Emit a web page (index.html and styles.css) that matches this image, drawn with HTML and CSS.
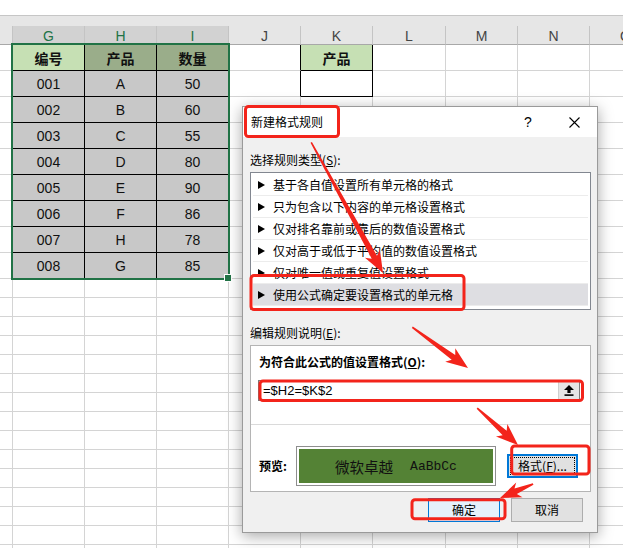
FILE: index.html
```html
<!DOCTYPE html>
<html lang="zh-CN">
<head>
<meta charset="utf-8">
<title>新建格式规则</title>
<link rel="stylesheet" href="styles.css">
</head>
<body>
<div class="topbar"></div>
<div class="band"></div>
<div class="sheet">
  <span class="ch"></span><span class="ch sel">G</span><span class="ch sel">H</span><span class="ch sel">I</span><span class="ch">J</span><span class="ch">K</span><span class="ch">L</span><span class="ch">M</span><span class="ch">N</span><span class="ch">O</span>

  <span></span><span class="t h1 act">编号</span><span class="t h1">产品</span><span class="t h1">数量</span><span class="jk"></span><span class="k k1">产品</span><span></span><span></span><span></span><span></span>
  <span></span><span class="t">001</span><span class="t">A</span><span class="t">50</span><span class="jk"></span><span class="k"></span><span></span><span></span><span></span><span></span>
  <span></span><span class="t">002</span><span class="t">B</span><span class="t">60</span><span></span><span></span><span></span><span></span><span></span><span></span>
  <span></span><span class="t">003</span><span class="t">C</span><span class="t">55</span><span></span><span></span><span></span><span></span><span></span><span></span>
  <span></span><span class="t">004</span><span class="t">D</span><span class="t">80</span><span></span><span></span><span></span><span></span><span></span><span></span>
  <span></span><span class="t">005</span><span class="t">E</span><span class="t">90</span><span></span><span></span><span></span><span></span><span></span><span></span>
  <span></span><span class="t">006</span><span class="t">F</span><span class="t">86</span><span></span><span></span><span></span><span></span><span></span><span></span>
  <span></span><span class="t">007</span><span class="t">H</span><span class="t">78</span><span></span><span></span><span></span><span></span><span></span><span></span>
  <span></span><span class="t">008</span><span class="t">G</span><span class="t">85</span><span></span><span></span><span></span><span></span><span></span><span></span>

  <span></span><span></span><span></span><span></span><span></span><span></span><span></span><span></span><span></span><span></span>
  <span></span><span></span><span></span><span></span><span></span><span></span><span></span><span></span><span></span><span></span>
  <span></span><span></span><span></span><span></span><span></span><span></span><span></span><span></span><span></span><span></span>
  <span></span><span></span><span></span><span></span><span></span><span></span><span></span><span></span><span></span><span></span>
  <span></span><span></span><span></span><span></span><span></span><span></span><span></span><span></span><span></span><span></span>
  <span></span><span></span><span></span><span></span><span></span><span></span><span></span><span></span><span></span><span></span>
  <span></span><span></span><span></span><span></span><span></span><span></span><span></span><span></span><span></span><span></span>
  <span></span><span></span><span></span><span></span><span></span><span></span><span></span><span></span><span></span><span></span>
  <span></span><span></span><span></span><span></span><span></span><span></span><span></span><span></span><span></span><span></span>
  <span></span><span></span><span></span><span></span><span></span><span></span><span></span><span></span><span></span><span></span>
  <span></span><span></span><span></span><span></span><span></span><span></span><span></span><span></span><span></span><span></span>
  <span></span><span></span><span></span><span></span><span></span><span></span><span></span><span></span><span></span><span></span>
  <span></span><span></span><span></span><span></span><span></span><span></span><span></span><span></span><span></span><span></span>
  <span></span><span></span><span></span><span></span><span></span><span></span><span></span><span></span><span></span><span></span>
  <span></span><span></span><span></span><span></span><span></span><span></span><span></span><span></span><span></span><span></span>
</div>
<div class="selection"></div>
<div class="handle"></div>

<div class="dialog">
  <div class="titlebar">
    <span class="title">新建格式规则</span>
    <span class="tb-btn help">?</span>
    <span class="tb-btn close"><svg width="11" height="11" viewBox="0 0 11 11"><path d="M0.5 0.5L10.5 10.5M10.5 0.5L0.5 10.5" stroke="#000" stroke-width="1.1" fill="none"/></svg></span>
  </div>
  <div class="dbody">
    <div class="lbl lbl1">选择规则类型(<u>S</u>):</div>
    <div class="listbox">
      <div class="item"><i class="tri"></i>基于各自值设置所有单元格的格式</div>
      <div class="item"><i class="tri"></i>只为包含以下内容的单元格设置格式</div>
      <div class="item"><i class="tri"></i>仅对排名靠前或靠后的数值设置格式</div>
      <div class="item"><i class="tri"></i>仅对高于或低于平均值的数值设置格式</div>
      <div class="item"><i class="tri"></i>仅对唯一值或重复值设置格式</div>
      <div class="item on"><i class="tri"></i>使用公式确定要设置格式的单元格</div>
    </div>
    <div class="lbl lbl2">编辑规则说明(<u>E</u>):</div>
    <div class="group">
      <div class="g-top">
        <div class="blbl">为符合此公式的值设置格式(<u>O</u>):</div>
        <div class="formula">
          <span class="ftext">=$H2=$K$2</span>
          <span class="collapse"><svg width="10" height="11" viewBox="0 0 10 11"><path d="M5 0L10 5H6.6V8H3.4V5H0Z" fill="#000"/><rect x="0.5" y="9.3" width="9" height="1.6" fill="#000"/></svg></span>
        </div>
      </div>
      <div class="g-bot">
        <span class="blbl pv-l">预览:</span>
        <div class="preview"><div class="pv-in"><span class="cj">微软卓越</span><span class="lat">AaBbCc</span></div></div>
        <button class="btn fmt">格式(<u>F</u>)...</button>
      </div>
    </div>
    <div class="actions">
      <button class="btn ok">确定</button>
      <button class="btn">取消</button>
    </div>
  </div>
</div>

<svg class="annot" width="623" height="548" viewBox="0 0 623 548">
  <g fill="#f3241b">
    <polygon transform="translate(383 273) rotate(61.2)" points="-149,-0.8 -18,-3 -22,-8.5 0,0 -22,8.5 -18,3 -149,0.8"/>
    <polygon transform="translate(468 368) rotate(36.2)" points="-69,-0.8 -18,-3 -22,-8.5 0,0 -22,8.5 -18,3 -69,0.8"/>
    <polygon transform="translate(518 445) rotate(42.1)" points="-55,-0.8 -18,-3 -22,-8.5 0,0 -22,8.5 -18,3 -55,0.8"/>
    <polygon transform="translate(500 498) rotate(157)" points="-36,-0.8 -17,-3 -21,-8 0,0 -21,8 -17,3 -36,0.8"/>
  </g>
  <g fill="none" stroke="#f3241b" stroke-width="3">
    <rect x="245.5" y="106.5" width="93" height="30" rx="3"/>
    <rect x="251" y="275.5" width="213" height="34" rx="3"/>
    <rect x="260" y="381" width="322.5" height="19.5" rx="3"/>
    <rect x="511.7" y="446" width="77.3" height="28" rx="3"/>
    <rect x="412" y="499.7" width="93" height="19" rx="3"/>
  </g>
</svg>
</body>
</html>
```

FILE: styles.css
```css
html, body {
  margin: 0;
  padding: 0;
  width: 623px;
  height: 548px;
  overflow: hidden;
  background: #fff;
}
body {
  position: relative;
  font-family: "Liberation Sans", "Noto Sans CJK SC", sans-serif;
}
.topbar {
  height: 15px;
  border-bottom: 1px solid #c6c6c6;
}
.band {
  height: 10px;
  background: #e6e6e6;
}
.sheet {
  display: grid;
  grid-template-columns: 13px 72px 72px 72px 72px 72px 73px 72px 72px 72px;
  grid-template-rows: 19px repeat(9, 26px) repeat(15, 19px);
  font-size: 14px;
  color: #111;
}
.sheet > span {
  box-sizing: border-box;
  border-right: 1px solid #d4d4d4;
  border-bottom: 1px solid #d4d4d4;
  display: flex;
  align-items: center;
  justify-content: center;
  overflow: hidden;
}
.sheet > span.ch {
  background: #e6e6e6;
  border-right-color: #c4c4c4;
  border-bottom-color: #a8a8a8;
  color: #444;
  font-size: 14px;
  padding-top: 2px;
}
.sheet > span.ch.sel {
  background: #d2d2d2;
  color: #217346;
}
.sheet > span.t {
  background: #c8c8c8;
  border-right-color: #000;
  border-bottom-color: #000;
}
.sheet > span.h1 {
  background: #9aad8a;
  font-family: "Noto Sans CJK SC", sans-serif;
  font-weight: bold;
  font-size: 14px;
}
.sheet > span.act {
  background: #c6e0b4;
}
.sheet > span.jk {
  border-right-color: #000;
}
.sheet > span.k {
  border-right-color: #000;
  border-bottom-color: #000;
}
.sheet > span.k1 {
  background: #c6e0b4;
  font-family: "Noto Sans CJK SC", sans-serif;
  font-weight: bold;
}
.selection {
  position: absolute;
  left: 11px;
  top: 43px;
  width: 219px;
  height: 237px;
  box-sizing: border-box;
  border: 2px solid #217346;
}
.handle {
  position: absolute;
  left: 224px;
  top: 274px;
  width: 6px;
  height: 6px;
  background: #217346;
  border: 1px solid #fff;
}

/* dialog */
.dialog {
  position: absolute;
  left: 242px;
  top: 106px;
  width: 356px;
  height: 427px;
  box-sizing: border-box;
  border: 1px solid #9a9a9a;
  background: #f0f0f0;
  box-shadow: 0 3px 14px rgba(0, 0, 0, 0.35);
  font-family: "Noto Sans CJK SC", "Liberation Sans", sans-serif;
  font-size: 12px;
  color: #000;
  display: flex;
  flex-direction: column;
}
.titlebar {
  height: 30px;
  background: #fff;
  display: flex;
  align-items: center;
}
.title {
  flex: 1;
  padding-left: 8px;
  line-height: 16px;
}
.tb-btn {
  width: 46px;
  height: 30px;
  display: flex;
  align-items: center;
  justify-content: center;
}
.help {
  font-family: "Liberation Sans", sans-serif;
  font-size: 14px;
}
.dbody {
  flex: 1;
  padding: 0 6px 0 7px;
}
.lbl {
  height: 16px;
  line-height: 16px;
}
.lbl1 {
  margin-top: 15px;
  margin-bottom: 4px;
}
.lbl2 {
  margin-top: 15px;
  margin-bottom: 4px;
}
.listbox {
  height: 138px;
  box-sizing: border-box;
  border: 1px solid #828790;
  background: #fff;
  padding: 1px 2px;
}
.item {
  height: 22px;
  box-sizing: border-box;
  border-bottom: 1px solid #ececec;
  display: flex;
  align-items: center;
  padding-left: 5px;
  line-height: 16px;
}
.item.on {
  background: #dedee2;
}
.tri {
  width: 0;
  height: 0;
  border-left: 7px solid #000;
  border-top: 4px solid transparent;
  border-bottom: 4px solid transparent;
  margin-right: 8px;
}
.group {
  height: 147px;
  box-sizing: border-box;
  border: 1px solid #b4b4b4;
  background: #fff;
}
.g-top {
  height: 79px;
  box-sizing: border-box;
  border-bottom: 1px solid #dadada;
  padding: 8px 0 0 7px;
}
.blbl {
  font-weight: bold;
  height: 16px;
  line-height: 16px;
  padding-left: 1px;
}
.formula {
  margin-top: 10px;
  width: 322px;
  height: 21px;
  box-sizing: border-box;
  border: 1px solid #7a7a7a;
  display: flex;
  align-items: center;
}
.ftext {
  flex: 1;
  padding-left: 4px;
  font-family: "Liberation Sans", sans-serif;
  font-size: 13px;
}
.collapse {
  width: 20px;
  height: 19px;
  background: #e5e5e5;
  border-left: 1px solid #cfcfcf;
  display: flex;
  align-items: center;
  justify-content: center;
}
.g-bot {
  display: flex;
  align-items: center;
  padding: 21px 0 0 8px;
}
.pv-l {
  width: 37px;
  padding-left: 0;
}
.preview {
  width: 200px;
  height: 40px;
  box-sizing: border-box;
  border: 1px solid #8e8e8e;
  padding: 2px;
  background: #fff;
}
.pv-in {
  height: 100%;
  background: #548235;
  display: flex;
  align-items: center;
  justify-content: center;
  gap: 17px;
  color: #111;
}
.cj {
  font-size: 14.5px;
  letter-spacing: 0;
}
.lat {
  font-family: "Liberation Mono", monospace;
  font-size: 13px;
}
.btn {
  width: 72px;
  height: 24px;
  box-sizing: border-box;
  font-family: "Noto Sans CJK SC", "Liberation Sans", sans-serif;
  font-size: 12px;
  line-height: 20px;
  color: #000;
  border: 1px solid #adadad;
  background: #e1e1e1;
  padding: 0;
  margin: 0;
}
.fmt {
  width: 71px;
  margin-left: 11px;
  border: 2px solid #0078d7;
  outline: 1px dotted #000;
  outline-offset: -4px;
}
.ok {
  background: #e5f1fb;
  border-color: #0078d7;
}
.actions {
  display: flex;
  justify-content: flex-end;
  gap: 11px;
  margin-top: 6px;
  padding-right: 8px;
}
.annot {
  position: absolute;
  left: 0;
  top: 0;
  pointer-events: none;
}
```
